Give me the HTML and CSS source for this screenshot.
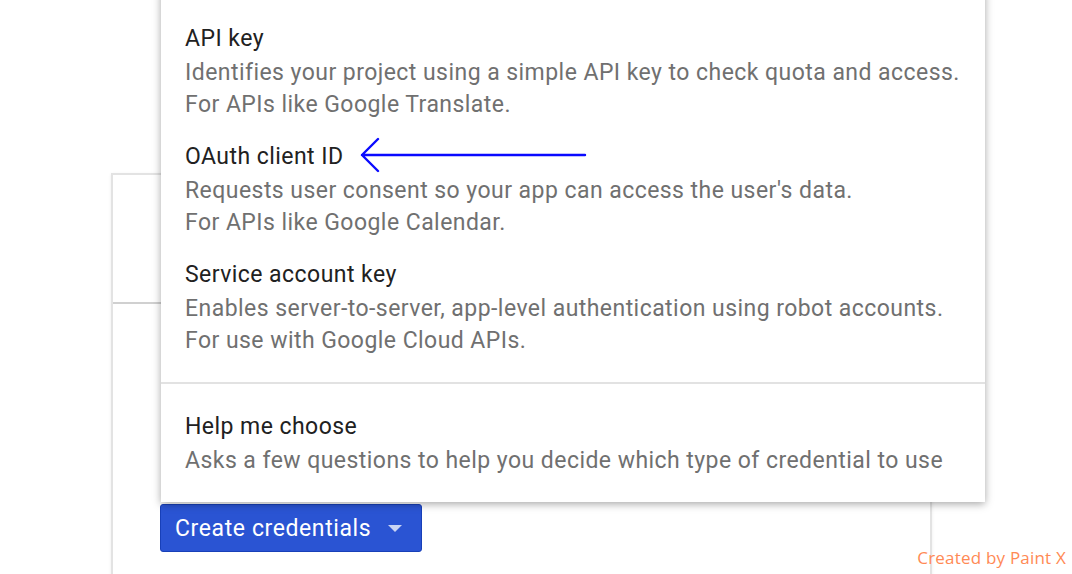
FILE: index.html
```html
<!DOCTYPE html>
<html lang="en">
<head>
    <meta charset="UTF-8">
    <meta name="viewport" content="width=device-width, initial-scale=1.0">
    <title>Credentials</title>
    <link rel="stylesheet" href="styles.css">
</head>
<body>
    <div class="page">
        <div class="card">
            <div class="card-row card-row-top"></div>
            <div class="card-row card-row-bottom">
                <button class="create-btn" type="button">
                    Create credentials
                    <span class="caret"></span>
                </button>
            </div>
        </div>

        <div class="menu">
            <div class="menu-section">
                <div class="menu-item">
                    <div class="item-title">API key</div>
                    <div class="item-desc">Identifies your project using a simple API key to check quota and access.</div>
                    <div class="item-desc">For APIs like Google Translate.</div>
                </div>
                <div class="menu-item">
                    <div class="item-title">OAuth client ID</div>
                    <div class="item-desc">Requests user consent so your app can access the user's data.</div>
                    <div class="item-desc">For APIs like Google Calendar.</div>
                </div>
                <div class="menu-item">
                    <div class="item-title">Service account key</div>
                    <div class="item-desc">Enables server-to-server, app-level authentication using robot accounts.</div>
                    <div class="item-desc">For use with Google Cloud APIs.</div>
                </div>
            </div>
            <div class="menu-section menu-section-help">
                <div class="menu-item">
                    <div class="item-title">Help me choose</div>
                    <div class="item-desc">Asks a few questions to help you decide which type of credential to use</div>
                </div>
            </div>

            <!-- hand drawn arrow pointing at OAuth client ID -->
            <svg class="arrow" width="230" height="40" viewBox="0 0 230 40">
                <path d="M2 20 H225 M2 20 L18 4 M2 20 L18 36" fill="none" stroke="#0a0aff" stroke-width="2.4" stroke-linecap="round"/>
            </svg>
        </div>

        <div class="watermark">Created by Paint X</div>
    </div>
</body>
</html>
```

FILE: styles.css
```css
body {
    margin: 0;
    padding: 0;
    background-color: #fff;
    font-family: Roboto, "Liberation Sans", sans-serif;
    overflow: hidden;
}

.page {
    position: relative;
    width: 1072px;
    height: 574px;
    overflow: hidden;
}

.card {
    margin-left: 111px;
    margin-top: 173px;
    width: 817px;
    height: 420px;
    border: 2px solid #e3e3e3;
    box-shadow: 0 1px 3px rgba(0, 0, 0, 0.08);
    background-color: #fff;
}

.card-row-top {
    height: 127px;
    border-bottom: 2px solid #d0d0d0;
}

.card-row-bottom {
    padding-left: 47px;
    padding-top: 200px;
}

.create-btn {
    display: flex;
    align-items: center;
    width: 262px;
    height: 48px;
    padding: 0 0 0 14px;
    background-color: #2a54d3;
    color: #fff;
    border: 1px solid #1840b8;
    border-radius: 3px;
    font-family: Roboto, "Liberation Sans", sans-serif;
    font-size: 23px;
    letter-spacing: 0.6px;
    cursor: pointer;
}

.caret {
    width: 0;
    height: 0;
    margin-left: 17px;
    border-left: 7px solid transparent;
    border-right: 7px solid transparent;
    border-top: 7px solid #c9d4f4;
}

.menu {
    position: absolute;
    left: 161px;
    top: -10px;
    width: 824px;
    background-color: #fff;
    box-shadow: 0 2px 8px rgba(0, 0, 0, 0.35);
}

.menu-section {
    padding: 23px 0 15px;
}

.menu-section-help {
    border-top: 2px solid #e2e2e2;
    padding: 17px 0 15px;
}

.menu-item {
    padding: 10px 24px;
}

.item-title {
    font-size: 23px;
    letter-spacing: 0.45px;
    line-height: 32px;
    color: #212121;
    margin-bottom: 2px;
}

.item-desc {
    font-size: 23px;
    letter-spacing: 0.45px;
    line-height: 32px;
    color: #707070;
    white-space: nowrap;
}

.arrow {
    position: absolute;
    left: 199px;
    top: 145px;
}

.watermark {
    position: absolute;
    right: 6px;
    bottom: 5px;
    font-family: "Open Sans", sans-serif;
    font-size: 17px;
    letter-spacing: 0.2px;
    color: #ff8a55;
}
```
